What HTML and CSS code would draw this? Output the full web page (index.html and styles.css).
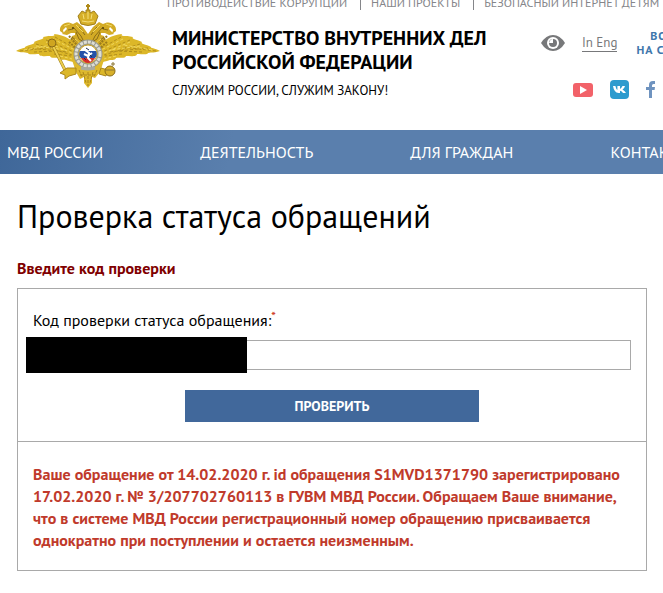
FILE: index.html
```html
<!DOCTYPE html>
<html lang="ru">

<head>
  <meta charset="UTF-8">
  <title>Проверка статуса обращений</title>
  <link rel="stylesheet" href="styles.css">
</head>

<body>

  <nav class="topbar">
    <a href="#">ПРОТИВОДЕЙСТВИЕ КОРРУПЦИИ</a>
    <a href="#">НАШИ ПРОЕКТЫ</a>
    <a href="#">БЕЗОПАСНЫЙ ИНТЕРНЕТ ДЕТЯМ</a>
  </nav>

  <header class="header">
    <a href="#" class="emblem" aria-label="МВД России">
      <svg viewBox="0 0 144 86" width="144" height="86">
        <defs>
          <!-- left half, mirrored for the right one -->
          <g id="half">
            <path fill="#dcb728" d="M66 46C58 36 48 31 38 30C40 33 35 31 27 33C29 35 24 35 18 38C20 40 14 40 9 43C10 44 5 44 0 47C5 49 8 48 12 49C12 51 18 50 23 50C23 53 30 52 34 52C35 55 40 53 44 54C45 57 49 55 53 57L62 59Z"/>
            <path fill="none" stroke="#b08d1c" stroke-width="1" stroke-dasharray="3 2" d="M4 47L38 43M12 44L52 48M20 40L56 51M30 36L58 48M39 33L60 45M18 48L42 47M38 50L55 52"/>
            <path fill="none" stroke="#f1d860" stroke-width="1" stroke-dasharray="3 2" d="M8 46L36 41M20 42L50 46M30 38L56 49M37 35L59 46M44 52L56 55"/>
            <path fill="#d3ab25" d="M72 46L61 42L54 37L56 32L59 31L59 29L55 29L51 31L46 30L51 25L50 23L47 26L48 30L44 27C43 20 51 16 57 20L61 18L67 23L72 30Z"/>
            <path fill="none" stroke="#8a6c18" stroke-width="1" d="M58 24L65 32L69 40M63 23L69 31M56 33L62 38M52 26L57 25M60 28L63 35L68 38"/>
            <path fill="none" stroke="#f1d860" stroke-width="1" d="M60 21L67 28M48 22L54 20M59 35L66 41"/>
            <circle cx="57" cy="24" r="1" fill="#4d3a0b"/>
            <path fill="none" stroke="#9c7c1b" stroke-width="2" stroke-dasharray="2 1" d="M53 32L61 41M53 38L60 44"/>
          </g>
        </defs>
        <use href="#half"/>
        <use href="#half" transform="matrix(-1 0 0 1 144 0)"/>
        <path fill="#deb92d" d="M56 56L88 56L84 68L79 74L76 73L76 79L72 84L68 79L68 73L64 75L60 68Z"/>
        <path fill="none" stroke="#ab861b" stroke-width="1" stroke-dasharray="3 1" d="M63 66L66 73M67 68L70 79M72 68L72 82M77 68L74 79M81 66L78 73M64 71L80 71"/>
        <path fill="#d6af27" stroke="#a1801c" stroke-width="1" d="M65 20L62 12L66 7L70 9L70 6L74 6L74 9L78 7L82 12L79 20Q72 23 65 20Z"/>
        <path fill="none" stroke="#f5e07a" stroke-width="1" d="M66 17Q72 19 78 17M67 10L68 15M76 10L75 15M72 8L72 15"/>
        <path fill="none" stroke="#b08b1b" stroke-width="2" d="M72 0L72 6M70 2L74 2"/>
        <path fill="none" stroke="#9b7918" stroke-width="3" d="M37 42L50 68"/>
        <path fill="none" stroke="#ecce4c" stroke-width="2" d="M37 42L50 68"/>
        <circle cx="36" cy="39" r="4" fill="#cfa520" stroke="#8a6c18"/>
        <path fill="#dcb728" stroke="#ab861b" stroke-width="1" d="M60 64L51 64L44 69L49 71L49 75L53 72L60 70Z"/>
        <path fill="#dcb728" stroke="#ab861b" stroke-width="1" d="M85 64L92 66L90 72L83 70Z"/>
        <circle cx="94" cy="67" r="5" fill="#d8b02a" stroke="#8a6c18"/>
        <path fill="none" stroke="#8a7433" stroke-width="1" d="M90 66L98 66M97 58L97 62M95 60L99 60"/>
        <circle cx="72" cy="50" r="12" fill="none" stroke="#97978c" stroke-width="5"/>
        <circle cx="72" cy="50" r="12" fill="none" stroke="#deded4" stroke-width="3" stroke-dasharray="3 1"/>
        <circle cx="72" cy="50" r="9" fill="#fff" stroke="#c9a632"/>
        <path fill="#2551a8" d="M64 47L80 47Q82 51 79 54L65 54Q62 51 64 47Z"/>
        <path fill="#d62c29" d="M65 54L79 54Q76 59 72 59Q68 59 65 54Z"/>
        <path fill="none" stroke="#fff" stroke-width="2" d="M69 46L73 49L72 54L75 57M68 50L72 52L76 49"/>
        <path fill="none" stroke="#24304f" stroke-width="1" d="M70 44L73 46M68 54L70 56M74 51L76 53"/>
        <path fill="none" stroke="#aaaa9f" stroke-width="3" d="M65 64Q72 66 79 64"/>
      </svg>
    </a>

    <div class="brand">
      <div class="brand-name">МИНИСТЕРСТВО ВНУТРЕННИХ ДЕЛ РОССИЙСКОЙ ФЕДЕРАЦИИ</div>
      <div class="brand-motto">СЛУЖИМ РОССИИ, СЛУЖИМ ЗАКОНУ!</div>
    </div>

    <div class="tools">
      <div class="tools-row">
        <a href="#" class="icon" aria-label="Версия для слабовидящих">
          <svg viewBox="0 0 24 16" width="24" height="16">
            <path fill="#77787a" d="M0 8Q5 0 12 0T24 8Q19 16 12 16T0 8Z"/>
            <circle cx="12" cy="8" r="6" fill="#fff"/>
            <circle cx="12" cy="8" r="4" fill="#77787a"/>
            <path fill="#fff" d="M12 8L12 4Q9 4 8 8Z"/>
          </svg>
        </a>
        <a href="#" class="lang">In Eng</a>
        <a href="#" class="login">ВОЙТИ<br>НА СТАРЫЙ</a>
      </div>
      <div class="social">
        <a href="#" class="icon" aria-label="YouTube">
          <svg viewBox="0 0 20 14" width="20" height="14">
            <rect width="20" height="14" rx="3" fill="#f26269"/>
            <path fill="#fff" d="M7 3L14 7L7 11Z"/>
          </svg>
        </a>
        <a href="#" class="icon" aria-label="ВКонтакте">
          <svg viewBox="0 0 19 19" width="19" height="19">
            <rect width="19" height="19" rx="4" fill="#2d9bce"/>
            <path fill="#fff" d="M3 6H5.400Q6 9 7.400 10V6H10V9Q11.500 8 12.500 6H15Q14.500 8 12.500 9.500Q15 11 16 13H13Q12 11.200 10 10.700V13H8.500Q4 12.500 3 6Z"/>
          </svg>
        </a>
        <a href="#" class="icon" aria-label="Facebook">
          <svg viewBox="0 0 10 17" width="10" height="17">
            <path fill="#6f93bf" d="M3 17V9H0V6H3V4Q3 0 7 0H9V3H7.500Q6 3 6 4.500V6H9L8.600 9H6V17Z"/>
          </svg>
        </a>
      </div>
    </div>
  </header>

  <nav class="menu">
    <a href="#">МВД РОССИИ</a>
    <a href="#">ДЕЯТЕЛЬНОСТЬ</a>
    <a href="#">ДЛЯ ГРАЖДАН</a>
    <a href="#">КОНТАКТЫ</a>
  </nav>

  <main class="content">
    <h1>Проверка статуса обращений</h1>
    <p class="hint">Введите код проверки</p>

    <div class="panel">
      <form class="check-form">
        <label for="code">Код проверки статуса обращения:<span class="required">*</span></label>
        <div class="field">
          <input type="text" id="code" required>
          <span class="mask"></span>
        </div>
        <button type="submit">ПРОВЕРИТЬ</button>
      </form>
      <p class="result">Ваше обращение от 14.02.2020 г. id обращения S1MVD1371790 зарегистрировано 17.02.2020 г. № 3/207702760113 в ГУВМ МВД России. Обращаем Ваше внимание, что в системе МВД России регистрационный номер обращению присваивается однократно при поступлении и остается неизменным.</p>
    </div>
  </main>

</body>

</html>
```

FILE: styles.css
```css
* {
  box-sizing: border-box;
}

body {
  margin: 0;
  font-family: "PT Sans", "Noto Sans", sans-serif;
  font-size: 16px;
  color: #000;
  background: #fff;
  overflow: hidden;
}

a {
  color: inherit;
  text-decoration: none;
}

svg {
  display: block;
}

.topbar {
  display: flex;
  height: 18px;
  margin-top: -6px;
  padding-left: 167px;
  font-size: 12px;
  line-height: 18px;
  color: #85868a;
  white-space: nowrap;
}

.topbar a {
  height: 16px;
}

.topbar a + a {
  margin-left: 13px;
  padding-left: 10px;
  border-left: 1px solid #85868a;
}

.header {
  display: flex;
  height: 118px;
  padding-left: 16px;
}

.emblem {
  flex: none;
  margin-top: -8px;
}

.brand {
  flex: none;
  width: 330px;
  margin-left: 12px;
  padding-top: 14px;
}

.brand-name {
  font-size: 20px;
  font-weight: bold;
  line-height: 24px;
}

.brand-motto {
  margin-top: 7px;
  font-size: 13px;
  line-height: 20px;
}

.tools {
  flex: none;
  margin-left: 39px;
  padding-top: 17px;
}

.tools-row {
  display: flex;
  align-items: center;
}

.lang {
  margin-left: 17px;
  border-bottom: 1px solid #77787a;
  font-size: 13px;
  line-height: 17px;
  color: #77787a;
}

.login {
  margin-left: 19px;
  font-size: 12px;
  font-weight: bold;
  line-height: 14px;
  letter-spacing: 1px;
  text-align: center;
  color: #3f77ac;
}

.social {
  display: flex;
  align-items: center;
  gap: 17px;
  margin-top: 23px;
  padding-left: 32px;
}

.menu {
  display: flex;
  gap: 97px;
  padding-left: 7px;
  background: linear-gradient(100deg, #3f6799, #5a7fad 35%, #5a7fad);
  font-size: 16px;
  line-height: 44px;
  color: #fff;
  white-space: nowrap;
}

.content {
  padding: 22px 16px 22px 17px;
}

h1 {
  margin: 0;
  font-size: 32px;
  font-weight: normal;
  line-height: 40px;
}

.hint {
  margin: 21px 0 9px;
  font-size: 16px;
  font-weight: bold;
  line-height: 22px;
  color: #800000;
}

.panel {
  border: 1px solid #a9a9a9;
}

.check-form {
  display: flex;
  flex-direction: column;
  padding: 20px 15px 19px;
  border-bottom: 1px solid #a9a9a9;
}

.check-form label {
  line-height: 22px;
}

.required {
  color: #d0402c;
  font-size: 13px;
  vertical-align: top;
  line-height: 16px;
}

.field {
  position: relative;
  margin-top: 9px;
}

.field input {
  display: block;
  width: 100%;
  height: 30px;
  padding: 0 8px;
  border: 1px solid #a9a9a9;
  font: inherit;
}

/* hides the typed code */
.mask {
  position: absolute;
  top: -3px;
  left: -7px;
  width: 221px;
  height: 36px;
  background: #000;
}

.check-form button {
  align-self: center;
  width: 49%;
  height: 32px;
  margin-top: 20px;
  border: none;
  background: #41689b;
  color: #fff;
  font-family: inherit;
  font-size: 14px;
  font-weight: bold;
  cursor: pointer;
}

.check-form button:hover {
  background: #35588a;
}

.result {
  margin: 0;
  padding: 21px 15px 19px;
  font-weight: bold;
  line-height: 22px;
  color: #c03a2b;
}
```
